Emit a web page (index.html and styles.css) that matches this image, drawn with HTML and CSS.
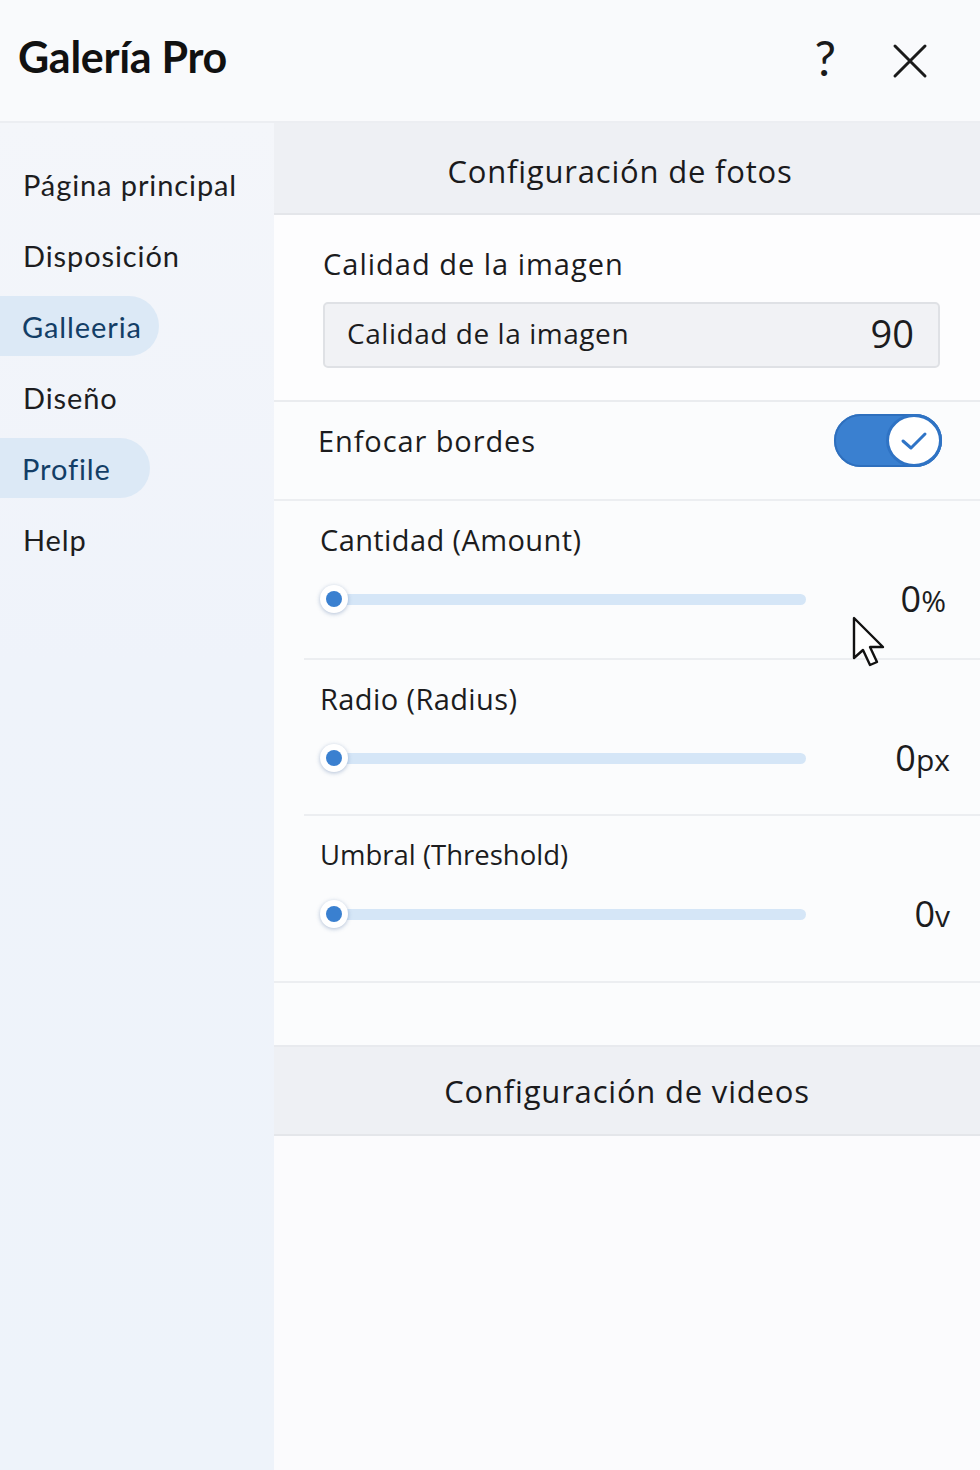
FILE: index.html
```html
<!DOCTYPE html>
<html lang="es">
<head>
<meta charset="utf-8">
<title>Galería Pro</title>
<link rel="stylesheet" href="styles.css">
</head>
<body>
<div class="app">
  <header class="topbar">
    <h1 class="title">Galería Pro</h1>
    <div class="actions">
      <span class="help">?</span>
      <svg class="close" width="36" height="36" viewBox="0 0 36 36"><path d="M3 3 L33 33 M33 3 L3 33" stroke="#1a1a1a" stroke-width="3" stroke-linecap="round"/></svg>
    </div>
  </header>
  <div class="layout">
    <nav class="sidebar">
      <a class="nav-item">Página principal</a>
      <a class="nav-item">Disposición</a>
      <a class="nav-item active wide">Galleeria</a>
      <a class="nav-item">Diseño</a>
      <a class="nav-item active">Profile</a>
      <a class="nav-item">Help</a>
    </nav>
    <main class="main">
      <div class="section-head">Configuración de fotos</div>
      <div class="field-block">
        <div class="field-label">Calidad de la imagen</div>
        <div class="input">
          <span>Calidad de la imagen</span>
          <span class="input-value">90</span>
        </div>
      </div>
      <div class="toggle-row">
        <span class="row-label">Enfocar bordes</span>
        <div class="toggle">
          <div class="knob">
            <svg width="28" height="22" viewBox="0 0 28 22"><path d="M3 11 L11 18 L25 4" fill="none" stroke="#2f74c6" stroke-width="3" stroke-linecap="round" stroke-linejoin="round"/></svg>
          </div>
        </div>
      </div>
      <div class="slider-block b1">
        <div class="slider-label">Cantidad (Amount)</div>
        <div class="slider-row">
          <div class="track"><span class="thumb"></span></div>
          <span class="slider-value v1">0<small>%</small></span>
        </div>
      </div>
      <div class="slider-block b2">
        <div class="slider-label">Radio (Radius)</div>
        <div class="slider-row">
          <div class="track"><span class="thumb"></span></div>
          <span class="slider-value">0<small>px</small></span>
        </div>
      </div>
      <div class="slider-block b3 last">
        <div class="slider-label narrow">Umbral (Threshold)</div>
        <div class="slider-row">
          <div class="track"><span class="thumb"></span></div>
          <span class="slider-value">0<small>v</small></span>
        </div>
      </div>
      <div class="spacer"></div>
      <div class="section-head videos">Configuración de videos</div>
      <div class="rest"></div>
    </main>
  </div>
  <svg class="cursor" width="40" height="54" viewBox="0 0 40 54"><path d="M2 2 L2 42 L11 34 L18 49 L25 46 L18 31 L31 31 Z" fill="#fff" stroke="#111" stroke-width="2.4" stroke-linejoin="round"/></svg>
</div>
</body>
</html>
```
FILE: styles.css
```css
* { box-sizing: border-box; }
html, body { margin: 0; padding: 0; }
body {
  width: 980px;
  height: 1470px;
  overflow: hidden;
  background: #fafbfd;
  font-family: "Open Sans", "Noto Sans", sans-serif;
  color: #1c1c1e;
}
.app { position: relative; width: 980px; height: 1470px; display: flex; flex-direction: column; }
.topbar {
  height: 123px;
  background: #f9fafc;
  border-bottom: 2px solid #eceef2;
  display: flex;
  align-items: center;
  justify-content: space-between;
  padding: 0 52px 0 18px;
  flex: none;
}
.title {
  margin: 0;
  font-family: Lato, sans-serif;
  font-weight: 700;
  font-size: 43px;
  letter-spacing: -0.3px;
  color: #111;
  padding-bottom: 8px;
}
.actions { display: flex; align-items: center; gap: 56px; }
.help { font-family: Lato, sans-serif; font-size: 48px; font-weight: 400; color: #1a1a1a; line-height: 1; padding-bottom: 6px; }
.close { display: block; }
.layout { flex: 1; display: flex; }
.sidebar {
  width: 274px;
  flex: none;
  background: linear-gradient(180deg, #f4f6fa 0%, #eff3fa 40%, #eef3fa 100%);
  display: flex;
  flex-direction: column;
  align-items: flex-start;
  padding-top: 31px;
}
.nav-item {
  font-family: Lato, sans-serif;
  font-size: 29px;
  letter-spacing: 0.9px;
  color: #1d1d1f;
  height: 60px;
  display: flex;
  align-items: center;
  padding: 0 23px;
  margin-bottom: 11px;
  line-height: 1;
}
.nav-item.active {
  background: #dce9f6;
  color: #133e66;
  border-radius: 0 30px 30px 0;
  padding-left: 22px;
  width: 150px;
}
.nav-item.active.wide { width: 159px; }
.main { flex: 1; display: flex; flex-direction: column; background: #fbfcfd; }
.section-head {
  height: 92px;
  background: #eef0f4;
  border-bottom: 2px solid #e4e6ea;
  display: flex;
  align-items: center;
  justify-content: center;
  font-size: 31px;
  letter-spacing: 0.8px;
  color: #1a1a1c;
  padding-right: 14px;
  padding-top: 6px;
  flex: none;
}
.section-head.videos { height: 91px; border-top: 2px solid #e8eaee; padding-right: 0; padding-top: 0; }
.field-block {
  height: 187px;
  background: #fdfdfe;
  border-bottom: 2px solid #eaecef;
  padding: 27px 40px 0 49px;
}
.field-label { font-size: 29px; letter-spacing: 1px; line-height: 44px; }
.input {
  margin-top: 16px;
  height: 66px;
  background: #f1f2f5;
  border: 2px solid #dfe1e5;
  border-radius: 5px;
  display: flex;
  align-items: center;
  justify-content: space-between;
  padding: 0 24px 4px 22px;
  font-size: 28px;
  letter-spacing: 0.55px;
}
.input-value { font-size: 38px; letter-spacing: 0; }
.toggle-row {
  height: 99px;
  border-bottom: 2px solid #eceef1;
  display: flex;
  align-items: center;
  justify-content: space-between;
  padding: 0 38px 20px 44px;
  flex: none;
}
.row-label { font-size: 29px; letter-spacing: 0.9px; }
.toggle {
  width: 108px;
  height: 53px;
  border-radius: 27px;
  background: #3a80d0;
  box-shadow: inset 0 0 0 2px #2e6fbd;
  display: flex;
  justify-content: flex-end;
  align-items: center;
}
.knob {
  width: 56px;
  height: 53px;
  border-radius: 50%;
  background: #fff;
  border: 3px solid #2f73c4;
  display: flex;
  align-items: center;
  justify-content: center;
}
.slider-block {
  margin-left: 30px;
  border-bottom: 2px solid #eceef1;
  padding: 19px 0 0 16px;
  flex: none;
}
.slider-block.b1 { height: 159px; }
.slider-block.b2 { height: 156px; }
.slider-block.b3 { height: 167px; }
.slider-block.last { margin-left: 0; padding-left: 46px; }
.slider-label { font-size: 29px; letter-spacing: 0.4px; line-height: 40px; }
.slider-label.narrow { font-size: 27.5px; letter-spacing: 0; }
.slider-row { margin-top: 19px; height: 40px; display: flex; align-items: center; }
.track {
  position: relative;
  width: 486px;
  height: 11px;
  background: #d5e6f7;
  border-radius: 6px;
  flex: none;
}
.thumb {
  position: absolute;
  left: 0;
  top: 50%;
  width: 28px;
  height: 28px;
  margin-top: -14px;
  border-radius: 50%;
  background: #fff;
  box-shadow: 0 1px 4px rgba(40, 80, 140, 0.35);
}
.thumb::after {
  content: "";
  position: absolute;
  left: 6px;
  top: 6px;
  width: 16px;
  height: 16px;
  border-radius: 50%;
  background: #3a80d0;
}
.slider-value { flex: 1; text-align: right; font-size: 36px; padding-right: 30px; line-height: 1; }
.slider-value.v1 { padding-right: 34px; }
.slider-value small { font-size: 30px; }
.spacer { height: 62px; flex: none; }
.rest { flex: 1; background: #fbfbfd; }
.cursor { position: absolute; left: 852px; top: 616px; }
```
